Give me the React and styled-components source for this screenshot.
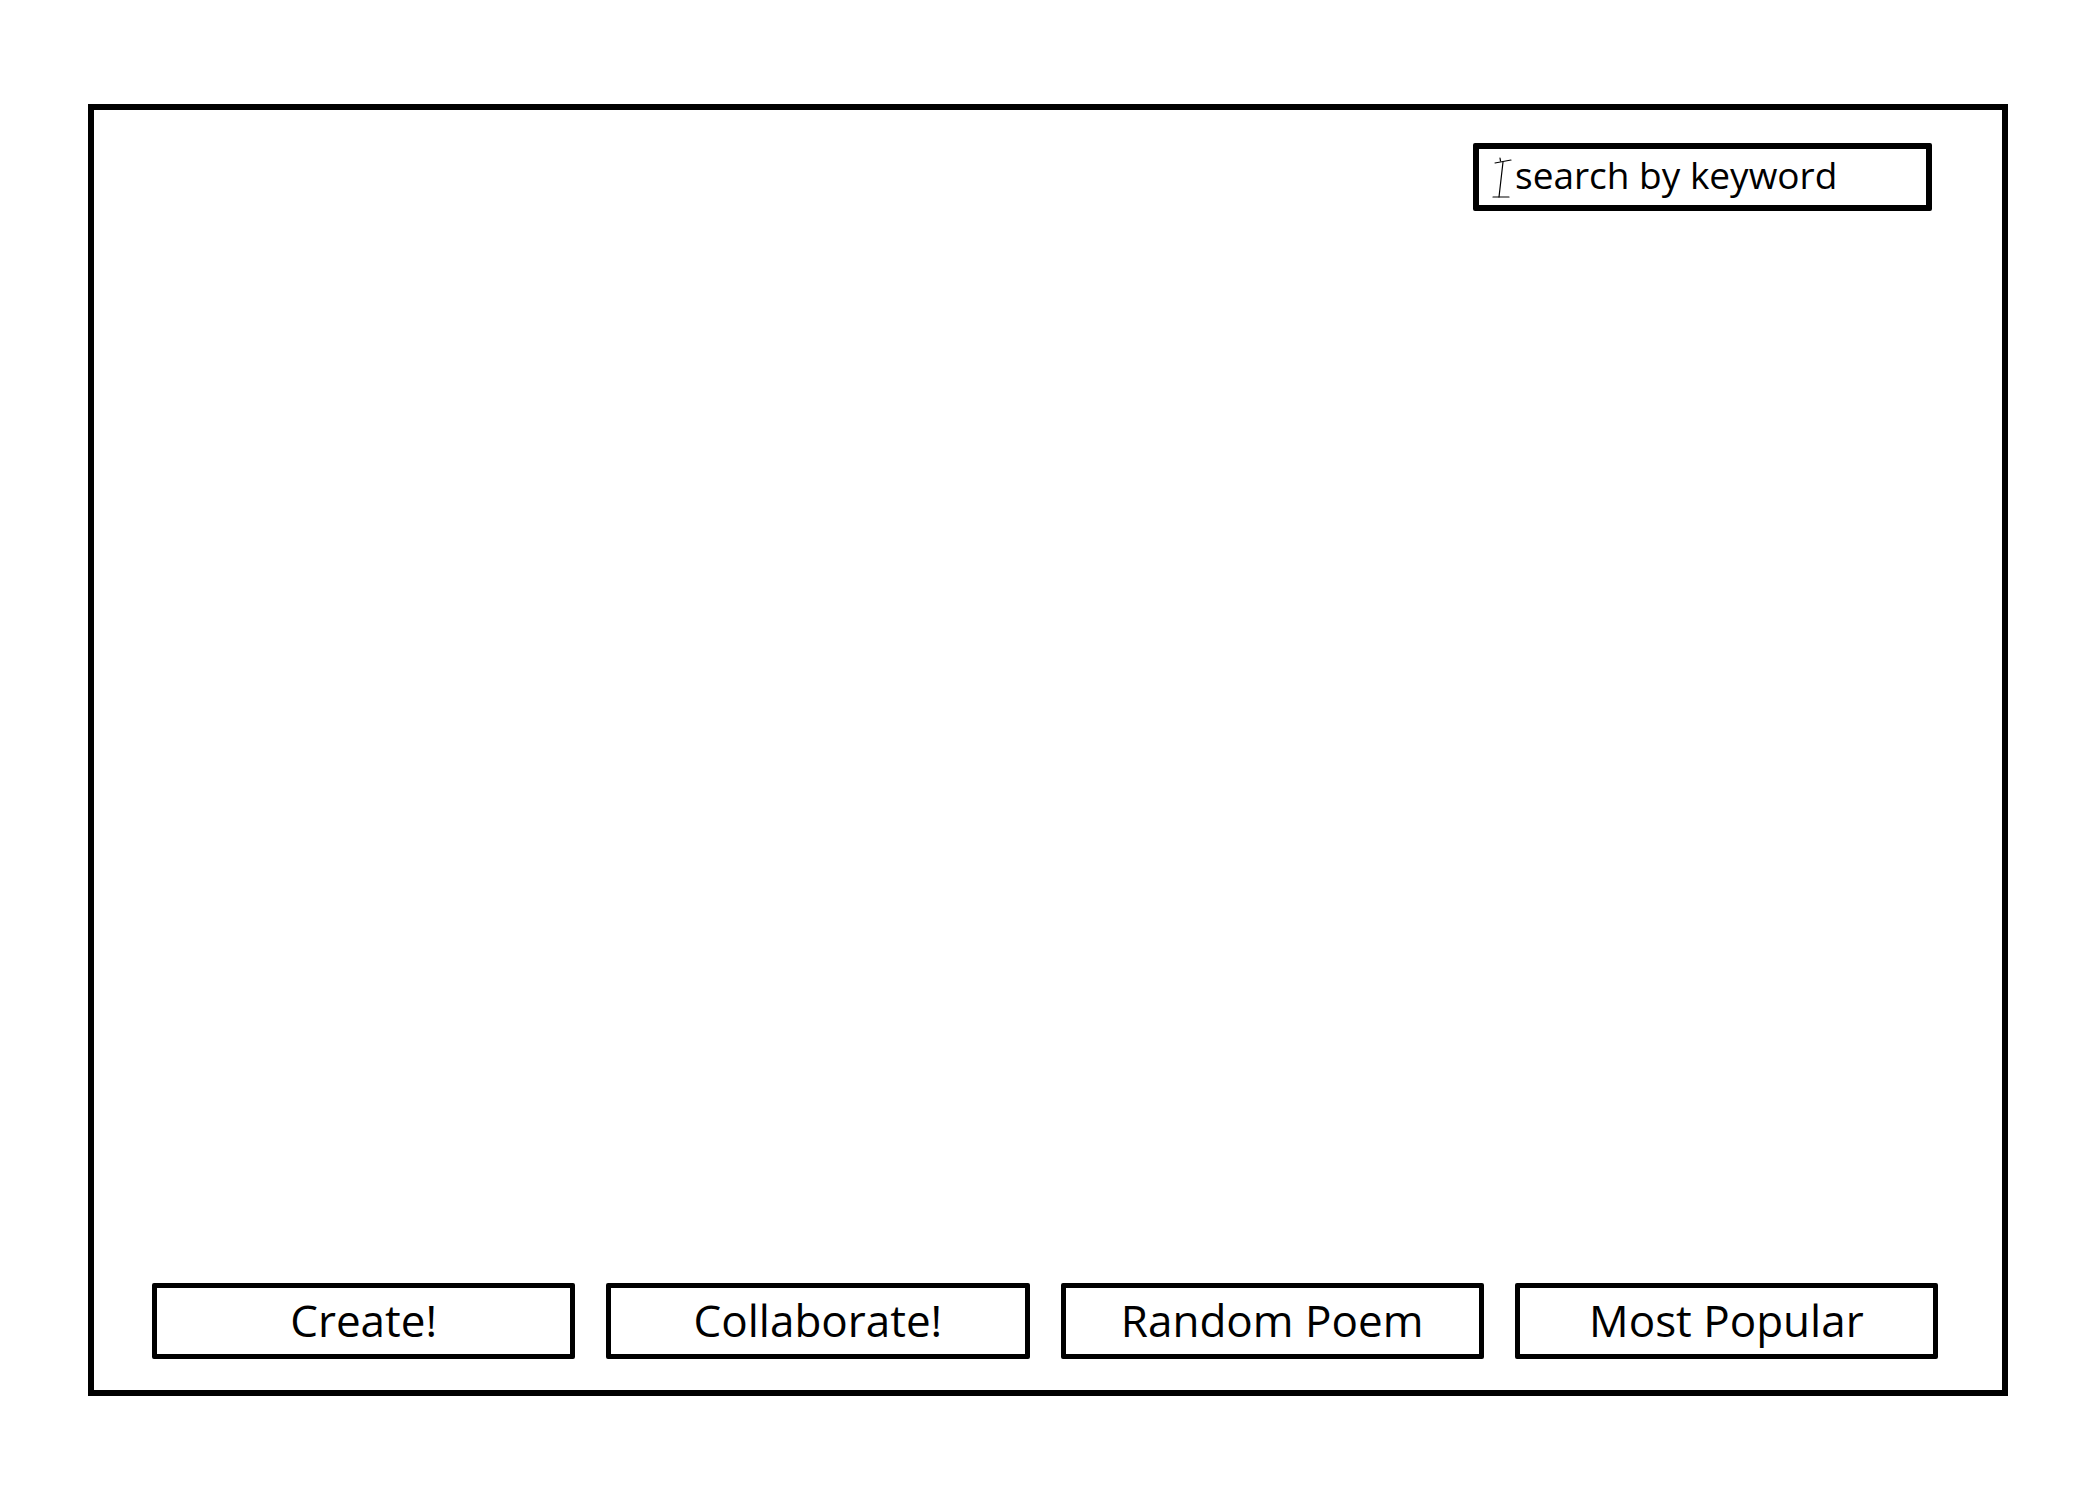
import styled, { createGlobalStyle } from "styled-components";

const GlobalStyle = createGlobalStyle`
  body {
    margin: 0;
    background: #fff;
    font-family: "Open Sans", "Liberation Sans", sans-serif;
    color: #000;
  }
`;

const buttons = ["Create!", "Collaborate!", "Random Poem", "Most Popular"];

const Page = styled.div`
  width: 2100px;
  height: 1500px;
  padding: 104px 0 0 88px;
  box-sizing: border-box;
`;

const Frame = styled.div`
  width: 1920px;
  height: 1292px;
  box-sizing: border-box;
  border: 6px solid #000;
  display: flex;
  flex-direction: column;
`;

const TopBar = styled.div`
  display: flex;
  justify-content: flex-end;
  padding: 33px 70px 0 0;
`;

const SearchBox = styled.div`
  width: 459px;
  height: 68px;
  box-sizing: border-box;
  border: 6px solid #000;
  border-radius: 2px;
  display: flex;
  align-items: center;
  padding-left: 13px;
  gap: 1px;
  svg {
    margin-top: 2px;
  }
`;

const SearchText = styled.span`
  font-size: 37px;
  line-height: 1;
  margin-top: -6px;
`;

const Content = styled.div`
  flex: 1;
`;

const ButtonRow = styled.div`
  display: grid;
  grid-template-columns: repeat(4, 1fr);
  gap: 31px;
  padding: 0 64px 31px 58px;
`;

const NavButton = styled.div`
  height: 76px;
  box-sizing: border-box;
  border: 5px solid #000;
  border-radius: 2px;
  display: flex;
  align-items: center;
  justify-content: center;
  font-size: 44px;
  line-height: 1;
  padding-bottom: 2px;
`;

function CursorIcon() {
  return (
    <svg width="22" height="44" viewBox="0 0 22 44" fill="none" stroke="#000" strokeWidth="1.2" strokeLinecap="round">
      <path d="M3 7 L19 4" />
      <path d="M8 2 L8.5 5" />
      <path d="M11 6 L7 41" />
      <path d="M1 41 L17 41" />
    </svg>
  );
}

export default function App() {
  return (
    <>
      <GlobalStyle />
      <Page>
        <Frame>
          <TopBar>
            <SearchBox>
              <CursorIcon />
              <SearchText>search by keyword</SearchText>
            </SearchBox>
          </TopBar>
          <Content />
          <ButtonRow>
            {buttons.map((label) => (
              <NavButton key={label}>{label}</NavButton>
            ))}
          </ButtonRow>
        </Frame>
      </Page>
    </>
  );
}
